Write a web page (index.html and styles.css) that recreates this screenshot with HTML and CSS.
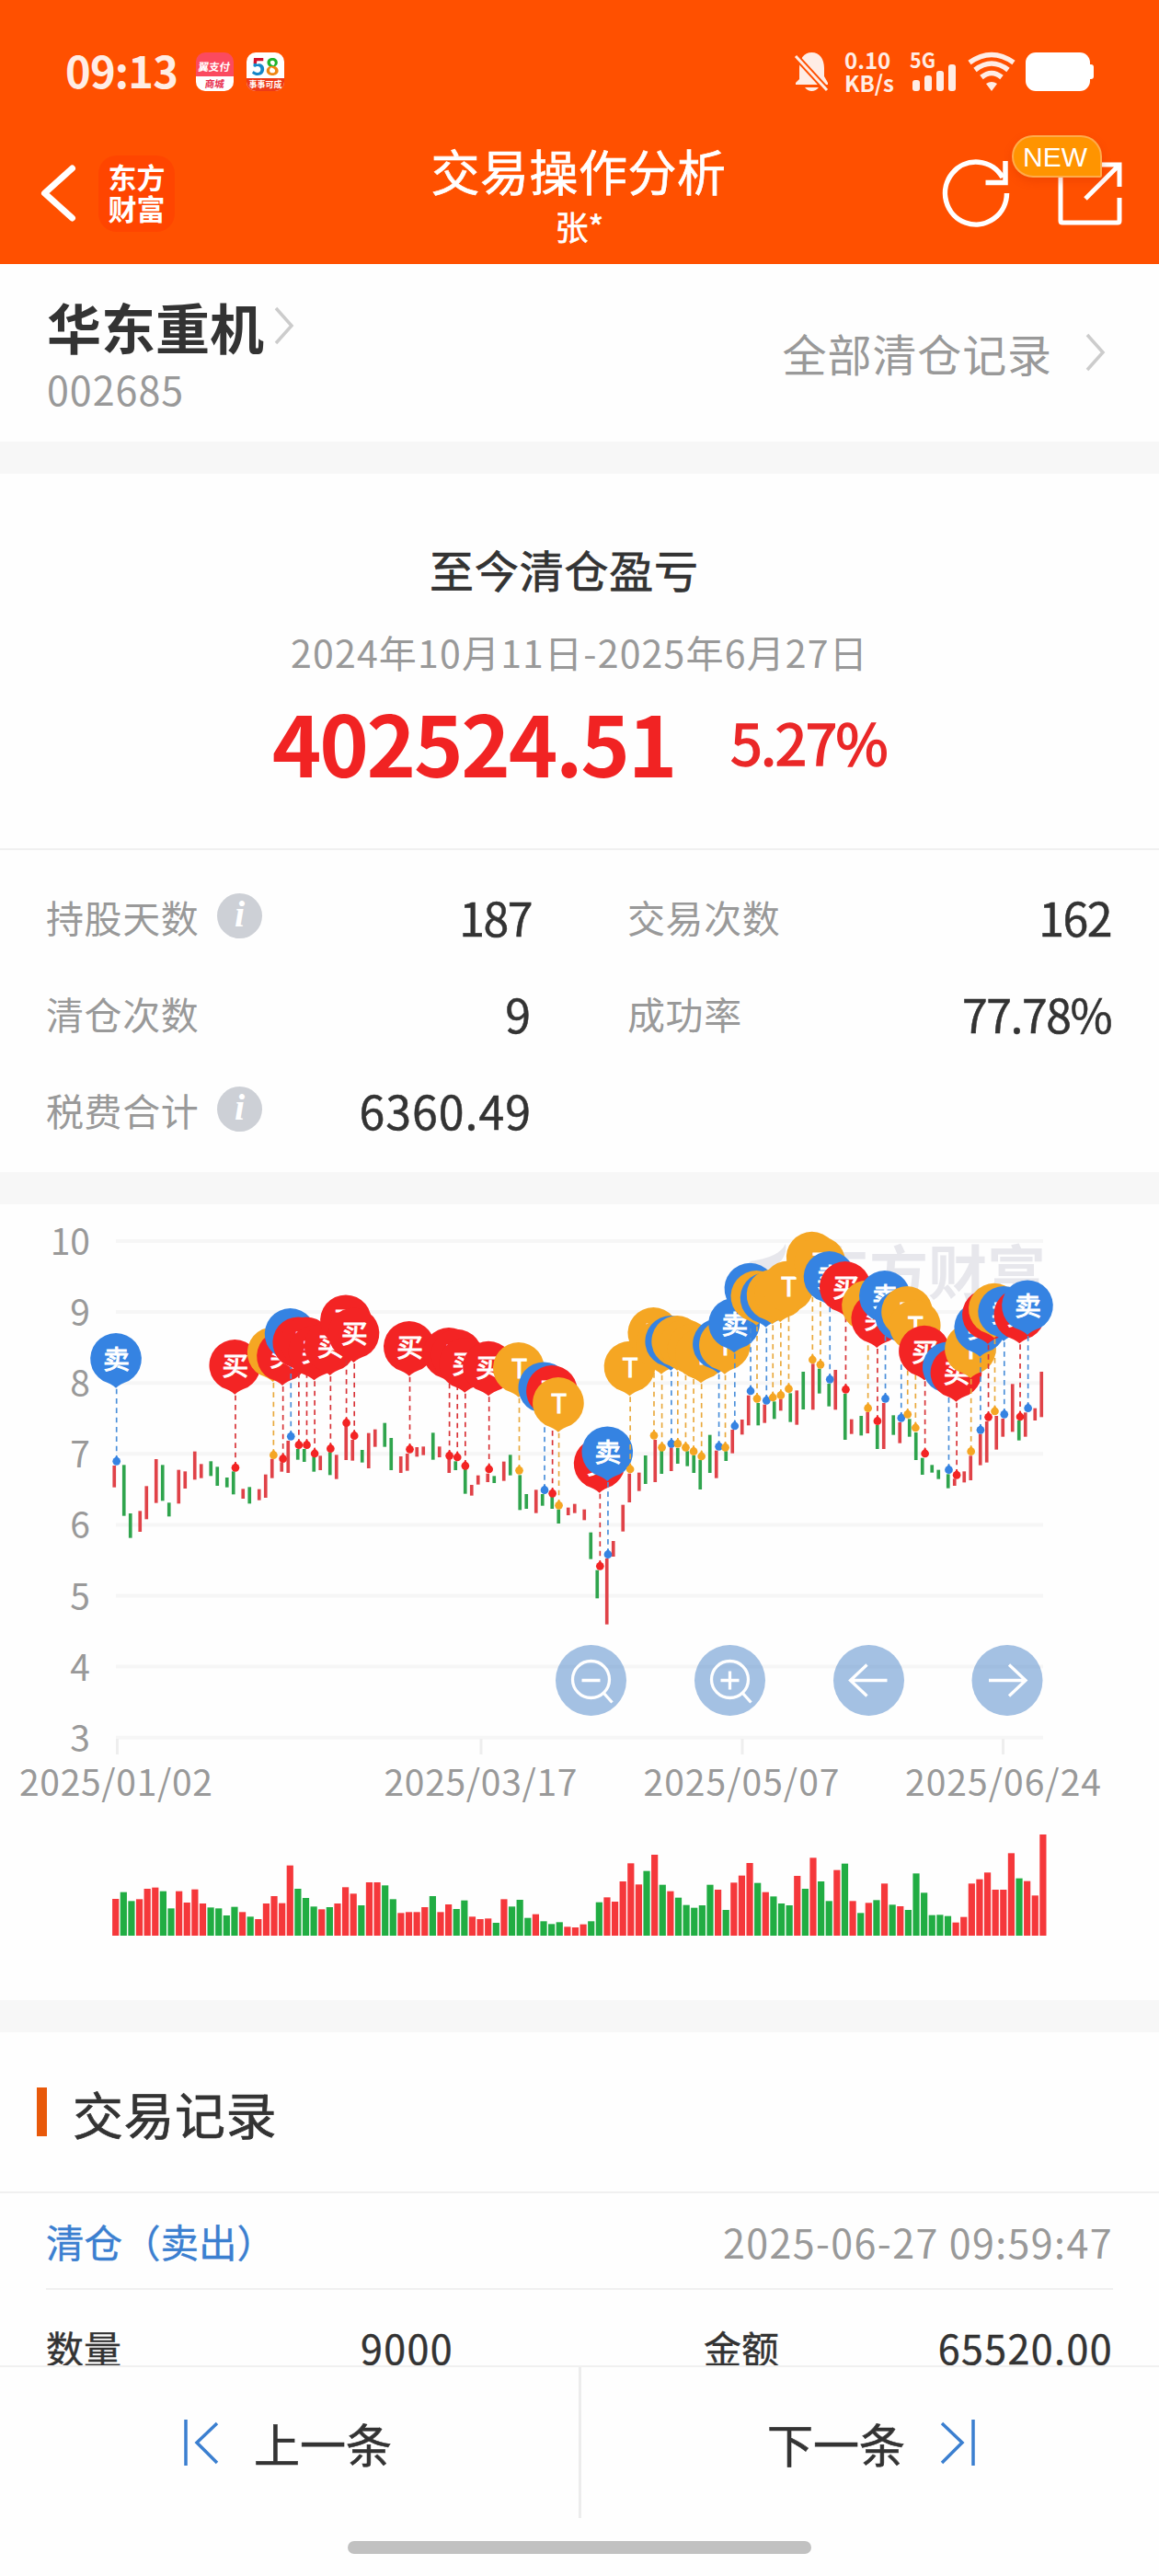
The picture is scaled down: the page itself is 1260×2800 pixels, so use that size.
FILE: index.html
```html
<!DOCTYPE html>
<html lang="zh-CN">
<head>
<meta charset="utf-8">
<title>交易操作分析</title>
<link rel="stylesheet" href="styles.css">
</head>
<body>
<div class="app">
  <header class="header">
    <div class="status">
      <div class="status-left">
        <span class="clock">09:13</span>
        <span class="app-icon pay"><b>翼支付</b><i>商城</i></span>
        <span class="app-icon city"><b><em class="c-blue">5</em><em class="c-mix">8</em></b><i>事事可成</i></span>
      </div>
      <div class="status-right">
        <svg class="bell" width="37" height="42" viewBox="0 0 37 42">
          <path d="M5 29V17C5 7 10 0 18.500 0S32 7 32 17v9l4 7v2H1v-2zM11 38h15q-3 4-7.500 4T11 38z" fill="#ffede5"/>
          <path d="M1 4l34 37" stroke="#ff5000" stroke-width="7"/>
          <path d="M1 4l34 37" stroke="#ffede5" stroke-width="3"/>
        </svg>
        <span class="speed"><span>0.10</span><span>KB/s</span></span>
        <svg class="signal" width="52" height="42" viewBox="0 0 52 42">
          <text x="0" y="17" class="fiveg" textLength="28" lengthAdjust="spacingAndGlyphs">5G</text>
          <g fill="#ffede5"><rect x="3" y="30" width="8" height="12" rx="3"/><rect x="16" y="25" width="8" height="17" rx="3"/><rect x="29" y="20" width="8" height="22" rx="3"/><rect x="42" y="13" width="8" height="29" rx="3"/></g>
        </svg>
        <svg class="wifi" width="52" height="42" viewBox="0 0 52 42">
          <g fill="none" stroke="#ffede5" stroke-width="5.500"><path d="M2 11Q26-6 50 11"/><path d="M8 19Q26 5 44 19"/><path d="M15 27Q26 18 37 27"/></g>
          <path d="M20 34q6-4 12 0l-6 8z" fill="#ffede5"/>
        </svg>
        <svg class="battery" width="75" height="42" viewBox="0 0 75 42"><rect width="70" height="42" rx="11" fill="#fff"/><rect x="64" y="13" width="10" height="16" rx="3" fill="#fff"/></svg>
      </div>
    </div>
    <nav class="nav">
      <div class="nav-left">
        <svg width="40" height="64" viewBox="0 0 40 64"><path d="M35.500 5L5.500 32l30 27" fill="none" stroke="#fff" stroke-width="7" stroke-linecap="round" stroke-linejoin="round"/></svg>
        <span class="brand">东方<br>财富</span>
      </div>
      <div class="nav-title"><h1>交易操作分析</h1><p>张*</p></div>
      <div class="nav-right">
        <svg width="76" height="76" viewBox="0 0 76 76" fill="none" stroke="#fff" stroke-width="5.500"><path d="M71.500 38A33.500 34 0 1 1 67 21"/><path d="M70 3v23.500H48.500"/></svg>
        <span class="share">
          <svg width="72" height="72" viewBox="0 0 72 72" fill="none" stroke="#fff" stroke-width="5"><path d="M4 4v62q0 2 2 2h60q2 0 2-2V41"/><path d="M42 5h26v24M68 5L31 42"/></svg>
          <span class="new">NEW</span>
        </span>
      </div>
    </nav>
  </header>

  <section class="stock">
    <div>
      <div class="stock-name">华东重机<svg width="24" height="44" viewBox="0 0 24 44"><path d="M3 3l17 19L3 41" fill="none" stroke="#ccc" stroke-width="3.500"/></svg></div>
      <div class="stock-code">002685</div>
    </div>
    <div class="all-records">全部清仓记录<svg width="24" height="44" viewBox="0 0 24 44"><path d="M3 3l17 19L3 41" fill="none" stroke="#ccc" stroke-width="3.500"/></svg></div>
  </section>

  <section class="summary">
    <h2>至今清仓盈亏</h2>
    <p class="range">2024年10月11日-2025年6月27日</p>
    <div class="profit"><span class="amount">402524.51</span><span class="rate">5.27%</span></div>
  </section>

  <section class="stats">
    <div class="stat"><span>持股天数</span><span class="info">i</span><b class="narrow">187</b></div>
    <div class="stat"><span>交易次数</span><b class="narrow">162</b></div>
    <div class="stat"><span>清仓次数</span><b>9</b></div>
    <div class="stat"><span>成功率</span><b class="tight">77.78%</b></div>
    <div class="stat"><span>税费合计</span><span class="info">i</span><b>6360.49</b></div>
  </section>

  <section class="chart"><svg id="chart" width="1260" height="865" viewBox="0 1309 1260 865"></svg></section>

  <section class="records">
    <h3>交易记录</h3>
    <div class="record">
      <div class="record-head"><span>清仓（卖出）</span><time>2025-06-27 09:59:47</time></div>
      <div class="record-row"><span>数量</span><b>9000</b><span>金额</span><b>65520.00</b></div>
    </div>
  </section>

  <footer class="pager">
    <div class="pager-row">
      <div class="prev"><svg width="40" height="50" viewBox="0 0 40 50" fill="none" stroke="#3b7fd0" stroke-width="3.500"><path d="M3 0v50M37 4L15 25l22 22"/></svg><span>上一条</span></div>
      <div class="next"><span>下一条</span><svg width="40" height="50" viewBox="0 0 40 50" fill="none" stroke="#3b7fd0" stroke-width="3.500"><path d="M37 0v50M3 4l22 21L3 47"/></svg></div>
    </div>
    <div class="home-bar"></div>
  </footer>
</div>
<script src="chart.js"></script>
</body>
</html>
```
FILE: styles.css
```css
* { box-sizing: border-box; margin: 0; padding: 0; }
body { background: #fefefe; color: #333; font-family: "Noto Sans CJK SC", sans-serif; }
svg { display: block; flex: none; overflow: visible; }
b, i, em, h1, h2, h3 { font-weight: 400; font-style: normal; }
.app { width: 1260px; height: 2800px; overflow: hidden; display: flex; flex-direction: column; white-space: nowrap; }
.app > * { flex: none; }

.header { height: 287px; background: #ff5000; color: #fff; }
.status { height: 156px; padding: 0 70px 0 71px; display: flex; align-items: center; justify-content: space-between; }
.status-left, .status-right { display: flex; align-items: center; color: #ffede5; }
.clock { width: 142px; font-size: 47px; font-weight: 700; line-height: 50px; letter-spacing: -0.8px; margin-top: -5px; }
.app-icon { width: 41px; height: 42px; border-radius: 10px; overflow: hidden; margin-right: 14px; display: flex; flex-direction: column; align-items: center; background: #fff; text-align: center; }
.pay { background: linear-gradient(#fb4a5f 0 26px, #fff 26px); }
.pay b { font-size: 11.500px; font-weight: 700; line-height: 26px; height: 26px; color: #fff; padding-top: 2px; transform: skewX(-8deg); }
.pay i { font-size: 10.500px; font-weight: 700; line-height: 15px; color: #e8304f; transform: skewX(-8deg); }
.city b { font-size: 26px; font-weight: 700; line-height: 30px; height: 29px; margin-top: -1px; }
.c-blue { font-weight: 700; background: linear-gradient(#d3122c 45%, #1687c9 45%); -webkit-background-clip: text; background-clip: text; color: transparent; }
.c-mix { font-weight: 700; background: linear-gradient(#1fb42c 55%, #ee8512 55%); -webkit-background-clip: text; background-clip: text; color: transparent; }
.city i { width: 41px; font-size: 9px; font-weight: 700; line-height: 14px; background: #ee3a18; color: #fff; }
.bell { margin-right: 17px; }
.speed { width: 71px; display: flex; flex-direction: column; font-size: 24px; font-weight: 700; line-height: 25px; margin-top: -2px; }
.fiveg { font-size: 23px; font-weight: 700; fill: #ffede5; }
.wifi { margin: 0 11px 0 11px; }
.nav { height: 131px; display: grid; grid-template-columns: 300px 1fr 300px; }
.nav-left { height: 108px; display: flex; align-items: center; gap: 24px; padding-left: 43px; }
.brand { width: 83px; height: 83px; border-radius: 20px; background: #ff4500; font-size: 31px; font-weight: 700; line-height: 34px; text-align: center; padding-top: 6px; }
.nav-title { text-align: center; }
.nav-title h1 { font-size: 53px; line-height: 58px; letter-spacing: 0.5px; margin-right: 2px; -webkit-text-stroke: 0.7px; }
.nav-title p { font-size: 36px; line-height: 62px; -webkit-text-stroke: 0.6px; }
.nav-right { height: 108px; display: flex; align-items: center; justify-content: flex-end; gap: 50px; padding-right: 39px; }
.share { position: relative; }
.new { position: absolute; left: -49px; top: -27px; width: 98px; height: 46px; background: #ff9400; border: 2px solid #ffab4a; border-radius: 23px 23px 2px 23px; font: 30px/43px "Liberation Sans", sans-serif; padding-left: 10px; box-shadow: 0 4px 10px rgba(200, 40, 0, .25); }

.stock { height: 228px; border-bottom: 35px solid #f7f7f7; padding: 32px 57px 0 51px; display: flex; justify-content: space-between; }
.stock-name { display: flex; gap: 10px; font-size: 59px; font-weight: 700; line-height: 72px; }
.stock-name svg { margin-top: 13px; }
.stock-code { font-size: 43px; line-height: 48px; letter-spacing: 1px; color: #999; margin-top: 7px; }
.all-records { display: flex; align-items: center; height: 128px; font-size: 48px; letter-spacing: 0.9px; color: #999; gap: 35px; }

.summary { height: 409px; border-bottom: 2px solid #f0f0f0; text-align: center; padding-top: 68px; }
.summary h2 { font-size: 48px; line-height: 70px; letter-spacing: 0.8px; margin-right: 33px; -webkit-text-stroke: 0.7px; }
.range { font-size: 41px; line-height: 60px; letter-spacing: 1.2px; color: #999; margin-top: 25px; }
.profit { display: flex; align-items: center; justify-content: center; gap: 60px; height: 90px; margin-top: 22px; }
.amount { font-size: 91px; font-weight: 700; letter-spacing: -2.3px; color: #f12323; line-height: 90px; }
.rate { font-size: 62px; letter-spacing: -1.5px; color: #ea2828; line-height: 90px; -webkit-text-stroke: 1.6px; }

.stats { height: 385px; border-bottom: 35px solid #f7f7f7; padding: 19px 52px 0 50px; display: grid; grid-template-columns: 528px 526px; column-gap: 104px; grid-auto-rows: 105px; }
.stat { display: flex; align-items: center; font-size: 41px; letter-spacing: 0.6px; color: #999; }
.stat b { margin-left: auto; font-size: 50px; color: #333; letter-spacing: 1px; -webkit-text-stroke: 0.5px; }
.stat .tight, .stat .narrow { letter-spacing: -1.5px; }
.info { width: 49px; height: 49px; margin-left: 20px; border-radius: 50%; background: #cdd0d6; color: #fff; font: italic 700 40px/46px "Liberation Serif", serif; text-align: center; }

.chart { height: 900px; border-bottom: 35px solid #f7f7f7; }
.axis { font-size: 39px; fill: #999; }
.grid { stroke: #f6f6f6; stroke-width: 4; }
.tick { stroke: #eee; stroke-width: 3; }
.watermark { font-size: 64px; font-weight: 700; fill: #e7e7ec; }
.pin-label { font-size: 86px; fill: #fff; stroke: #fff; stroke-width: 3; text-anchor: middle; }

.records { height: 362px; overflow: hidden; }
.records h3 { height: 175px; border-bottom: 2px solid #f0f0f0; padding-left: 40px; display: flex; align-items: center; gap: 28px; font-size: 55px; letter-spacing: 0.5px; -webkit-text-stroke: 0.7px; }
.records h3::before { content: ""; width: 11px; height: 53px; background: #e8590a; }
.record { padding: 0 50px; }
.record-head { height: 105px; border-bottom: 2px solid #f0f0f0; display: flex; align-items: center; justify-content: space-between; font-size: 41.500px; color: #3b7fd0; -webkit-text-stroke: 0.4px; }
.record-head time { color: #999; font-size: 43px; letter-spacing: 1.4px; -webkit-text-stroke: 0; }
.record-row { height: 124px; display: grid; grid-template-columns: 342px 373px 100px 1fr; align-items: center; font-size: 41px; -webkit-text-stroke: 0.4px; }
.record-row b { font-size: 43px; letter-spacing: 1.4px; }
.record-row b:last-child { text-align: right; }

.pager { height: 229px; border-top: 2px solid #f0f0f0; background: #fefefe; }
.pager-row { height: 164px; display: grid; grid-template-columns: 632px 1fr; font-size: 50px; -webkit-text-stroke: 0.6px; }
.pager-row > div { display: flex; align-items: center; gap: 37px; }
.prev { padding-left: 199px; border-right: 3px solid #ececec; }
.next { padding-left: 202px; }
.home-bar { width: 504px; height: 14px; border-radius: 7px; background: #c1c1c1; margin: 25px auto 0; }
```
FILE: chart.js
```js
// Each entry: colour, high, low. Heights are thirds of a pixel below y = 1320.
const candles = `r819,890 g817,983 g975,1055 r967,1035 r886,994 r798,941 g817,934 g940,985 r833,943 r838,894
r773,865 r814,860 g805,853 g823,885 g858,890 g838,913 r895,927 g889,943 r896,932 r848,924
r797,860 r808,839 r738,843 g765,800 g765,807 g790,839 r787,834 g775,850 r784,863 r690,801
r735,803 g768,809 r713,828 r701,758 g680,758 g729,834 r789,843 r780,836 r759,790 r757,785
g712,800 r757,792 r790,843 g805,834 g830,911 r882,917 r851,881 r845,873 g853,876 r806,869
g784,851 g850,964 g912,960 r898,974 g912,950 g920,960 g962,1008 r956,981 r944,974 r962,997
g1037,1124 g1160,1252 r1122,1337 r1065,1116 r947,1034 r845,939 r842,902 g786,879 r735,873 g770,846
r760,837 g762,813 g772,821 g786,843 g800,897 g719,843 r770,860 g772,804 r702,779 r669,718
r590,688 g615,688 r620,680 g610,667 r602,640 g583,677 r574,686 g513,636 r487,637 g503,584
g552,626 r507,637 g585,735 r668,716 g657,721 r645,714 g687,765 r615,765 g655,719 r678,746
g667,725 g711,801 g794,849 g817,842 g833,863 g847,893 r862,885 r838,874 r787,867 r716,818
r675,809 r657,767 r666,725 r553,709 g672,737 r646,725 r632,672 r513,661`.split(/\s+/);

// Volume bars: colour and top edge, thirds of a pixel below y = 1970.
const volumes = `r282 g260 g289 r283 r249 r245 g257 g313 r257 r294 r251 r297 g310 g313 g336 g308 r325 g340 r348 r297
r273 r296 r173 g249 g279 g307 r316 g309 r297 r244 r265 g303 r228 r228 g238 g283 r328 r325 r325 r309
g273 r325 r300 g315 g287 r340 r348 r346 g360 r283 g307 g285 g344 r332 g355 g364 g358 r373 r375 r365
g355 g293 r277 r291 r225 r166 r235 g191 r138 g236 r257 g278 g302 g311 g303 g236 r252 g318 r229 r206
r165 g230 r260 g274 g297 g303 r207 g249 r148 g225 g289 r188 g167 r289 g328 r295 g286 r232 g301 r306
g318 g199 g262 g335 g334 g338 r359 r341 r232 r218 r196 r252 r252 r133 g215 r224 r271 r72`.split(/\s+/);

// Trades: s = sell, b = buy, t = both; day index and dot height.
const trades = `s0,805 b15,826 t20,785 b21,797 s22,724 b23,752 b24,752 b25,780 b27,764 b29,680 b30,722 b37,766
b42,787 b43,792 b44,820 b47,831 t51,835 s54,899 b55,910 t56,949 b61,1147 s62,1109 t65,831 t68,721 t69,760
s70,748 t71,748 t72,760 t73,773 t74,789 s76,757 t77,760 s78,690 s80,576 t81,601 s82,607 t83,597 t84,590
t85,569 t88,474 t89,490 s90,538 b92,571 t95,632 b96,674 s97,601 s99,664 t100,652 t101,696 b102,780
s105,833 b106,850 t108,773 s109,703 b110,661 t111,642 s112,652 b114,660 s115,632`.split(/\s+/);

const kinds = {
  s: { fill: '#3583e2', line: '#4a8fda', label: '卖' },
  b: { fill: '#f32424', line: '#d83236', label: '买' },
  t: { fill: '#f5a623', line: '#e9a93c', label: 'T' }
};
const step = 8.617;
let out = '';

for (let n = 10; n >= 3; n--) {
  const y = 1349 + (10 - n) * 77.1;
  out += `<line class="grid" x1="126" x2="1134" y1="${y}" y2="${y}"/>`;
  out += `<text class="axis" x="98" y="${y + 15}" text-anchor="end">${n}</text>`;
}
[[127.5, '2025/01/02', 126], [523, '2025/03/17', 522.5], [807, '2025/05/07', 806], [1090.5, '2025/06/24', 1090.5]].forEach(([x, t, c], i) => {
  const w = i > 1 ? 213 : 210;
  out += `<line class="tick" x1="${x}" x2="${x}" y1="1890" y2="1907"/>`;
  out += `<text class="axis" x="${c - w / 2}" y="1952" textLength="${w}">${t}</text>`;
});
out += '<path d="M815 1371Q847 1367 854 1352Q857 1368 838 1380Q825 1388 815 1371Z" fill="#e7e7ec"/>';
out += '<text class="watermark" x="881" y="1407">东方财富</text>';

const px = (i) => 3 * 3.5 * (Math.round(35.2 + 2.463 * i) + 0.5);
out += '<g transform="translate(0 1320) scale(.33333)">';
candles.forEach((c, i) => {
  const [hi, lo] = c.slice(1).split(',').map(Number);
  out += `<rect x="${px(i) - 5.5}" y="${hi}" width="11" height="${lo - hi}" fill="${c[0] === 'r' ? '#e04248' : '#2fa44d'}"/>`;
});
trades.forEach((t) => {
  const k = kinds[t[0]];
  const [i, y] = t.slice(1).split(',').map(Number);
  const x = (126.7 + step * i) * 3 - (t[0] === 't' ? 5 : 0);
  const cx = x - 2;
  out += `<line x1="${x}" x2="${x}" y1="${y - 236}" y2="${y}" stroke="${k.line}" stroke-width="5" stroke-dasharray="17 14"/>`;
  out += `<path d="M${x - 12} ${y}L${x} ${y - 20}L${x + 12} ${y}Z" fill="${k.fill}"/><circle cx="${x}" cy="${y}" r="13" fill="${k.fill}"/>`;
  out += `<path d="M${cx} ${y - 239}Q${cx - 14} ${y - 252} ${cx - 42} ${y - 262}A83.5 83.5 0 1 1 ${cx + 42} ${y - 262}Q${cx + 14} ${y - 252} ${cx} ${y - 239}Z" fill="${k.fill}"/>`;
  out += `<text class="pin-label" x="${cx + 2}" y="${y - 301}">${k.label}</text>`;
});
out += '</g>';

volumes.forEach((v, i) => {
  const top = 1970 + Number(v.slice(1)) / 3;
  out += `<rect x="${125.7 + step * i - 3.6}" y="${top}" width="7.2" height="${2104 - top}" fill="${v[0] === 'r' ? '#f5383b' : '#21ad43'}"/>`;
});

const glyphs = [
  '<circle cx="0" cy="-1" r="20"/><path d="M-10 0H10M14 14l9 10"/>',
  '<circle cx="0" cy="-1" r="20"/><path d="M-10 0H10M0-10V10M14 14l9 10"/>',
  '<path d="M20 0H-19M-2-17L-20 0l18 17"/>',
  '<path d="M-20 0H19M2-17L20 0 2 17"/>'
];
[642.5, 793.5, 944.5, 1095].forEach((x, i) => {
  out += `<g transform="translate(${x} 1826.5)" fill="none" stroke="#fff" stroke-width="3.3"><circle r="38.5" fill="#4a84c8" fill-opacity=".5" stroke="none"/>${glyphs[i]}</g>`;
});
document.getElementById('chart').innerHTML = out;
```
